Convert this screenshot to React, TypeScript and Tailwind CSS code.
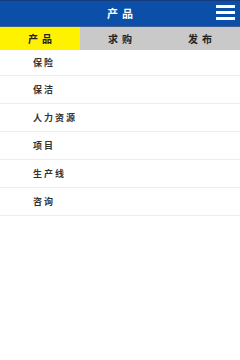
import React from "react";

const tabs = ["产品", "求购", "发布"];
const items = ["保险", "保洁", "人力资源", "项目", "生产线", "咨询"];

export default function App() {
  return (
    <div
      className="w-[240px] h-[360px] bg-white overflow-hidden"
      style={{ fontFamily: '"Noto Sans CJK SC", "Noto Sans", sans-serif' }}
    >
      {/* header */}
      <div className="relative h-[27px] bg-[#0b4fa9] border-t border-[#163a7a] border-b border-b-[#3d5f95] flex items-center justify-center">
        <span className="text-white text-[11px] font-bold tracking-[4px] pl-[4px]">产品</span>
        <div className="absolute right-[5px] top-[4px] w-[19px] flex flex-col gap-[3px]">
          <div className="h-[3px] bg-white" />
          <div className="h-[3px] bg-white" />
          <div className="h-[3px] bg-white" />
        </div>
      </div>

      {/* tabs */}
      <div className="grid grid-cols-3 h-[23px] bg-[#c9c9c9]">
        {tabs.map((t, i) => (
          <div
            key={t}
            className={
              "flex items-center justify-center text-[10px] font-bold tracking-[4px] pl-[4px] text-[#222] " +
              (i === 0 ? "bg-[#fff200]" : "")
            }
          >
            {t}
          </div>
        ))}
      </div>

      {/* list */}
      <div className="flex flex-col">
        {items.map((it, i) => (
          <div
            key={it}
            className={
              "flex items-center pl-[33px] border-b border-[#ececec] text-[9px] font-bold tracking-[2px] text-[#333] " +
              (i === 0 ? "h-[26px]" : "h-[28px]")
            }
          >
            {it}
          </div>
        ))}
      </div>
    </div>
  );
}
